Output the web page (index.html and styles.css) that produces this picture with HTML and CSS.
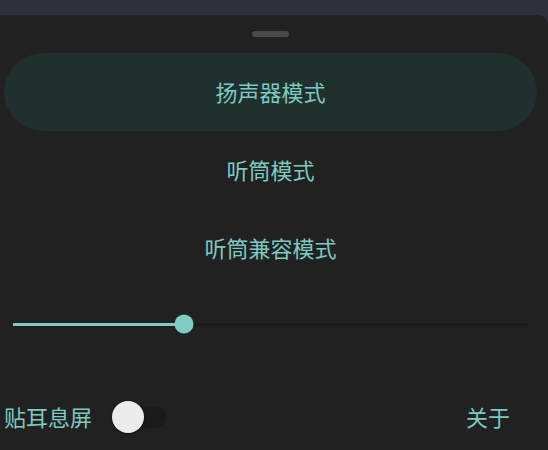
FILE: index.html
```html
<!DOCTYPE html>
<html lang="zh-CN">
<head>
<meta charset="utf-8">
<link rel="stylesheet" href="styles.css">
</head>
<body>
<div class="topbar"></div>
<div class="sheet">
  <div class="handle-row"><div class="handle"></div></div>
  <div class="menu">
    <div class="item active">扬声器模式</div>
    <div class="item">听筒模式</div>
    <div class="item">听筒兼容模式</div>
  </div>
  <div class="slider">
    <div class="track">
      <div class="fill" style="width: 171px"></div>
      <div class="thumb" style="left: 171px"></div>
    </div>
  </div>
  <div class="bottom">
    <span class="label">贴耳息屏</span>
    <div class="switch">
      <div class="switch-track"></div>
      <div class="switch-thumb"></div>
    </div>
    <span class="about">关于</span>
  </div>
</div>
</body>
</html>
```
FILE: styles.css
```css
html, body {
  margin: 0;
  padding: 0;
  width: 548px;
  height: 450px;
  overflow: hidden;
  background: #2e313b;
  font-family: "Noto Sans CJK SC", "Noto Sans", sans-serif;
}
.topbar {
  height: 15px;
  background: #2e313b;
}
.sheet {
  height: 435px;
  background: #212121;
  border-top-right-radius: 10px;
  display: flex;
  flex-direction: column;
}
.handle-row {
  display: flex;
  justify-content: center;
  margin: 16px 11px 16px 4px;
}
.handle {
  width: 37px;
  height: 6px;
  border-radius: 3px;
  background: #4a4a4a;
}
.menu {
  display: flex;
  flex-direction: column;
  margin: 0 11px 0 4px;
}
.item {
  height: 78px;
  box-sizing: border-box;
  padding-bottom: 2px;
  display: flex;
  align-items: center;
  justify-content: center;
  font-size: 22px;
  line-height: 30px;
  color: #7ccac0;
  border-radius: 39px;
}
.item.active {
  background: #1f302e;
}
.slider {
  height: 74px;
  display: flex;
  align-items: center;
  padding: 0 20px 0 13px;
}
.track {
  position: relative;
  flex: 1;
  height: 3px;
  background: #1a1a1a;
}
.fill {
  height: 3px;
  background: #80cbc4;
}
.thumb {
  position: absolute;
  top: 50%;
  width: 19px;
  height: 19px;
  border-radius: 50%;
  background: #80cbc4;
  transform: translate(-50%, -50%);
}
.bottom {
  display: flex;
  align-items: center;
  height: 56px;
  margin-top: 28px;
  padding: 0 38px 0 4px;
}
.label, .about {
  font-size: 22px;
  line-height: 30px;
  color: #7ccac0;
  padding-bottom: 3px;
}
.switch {
  position: relative;
  width: 54px;
  height: 32px;
  margin-left: 20px;
  display: flex;
  align-items: center;
}
.switch-track {
  margin-left: 2px;
  width: 52px;
  height: 22px;
  border-radius: 11px;
  background: #1a1a1a;
}
.switch-thumb {
  position: absolute;
  left: 0;
  top: 0;
  width: 32px;
  height: 32px;
  border-radius: 50%;
  background: #ececec;
  box-shadow: 0 1px 3px rgba(0, 0, 0, 0.4);
}
.about {
  margin-left: auto;
}
```
